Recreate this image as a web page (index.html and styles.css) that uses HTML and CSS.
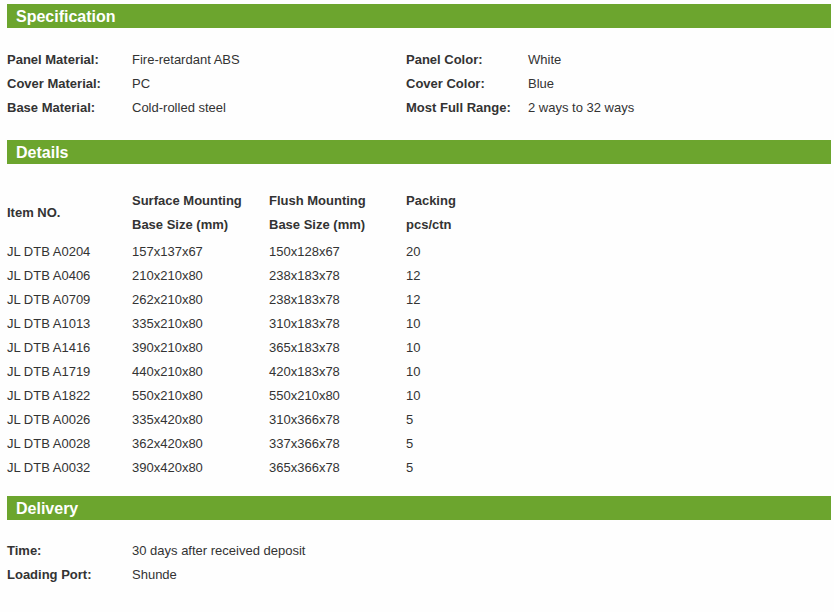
FILE: index.html
```html
<!DOCTYPE html>
<html>
<head>
<meta charset="utf-8">
<link rel="stylesheet" href="styles.css">
</head>
<body>
<div class="page">
  <h2 class="bar">Specification</h2>
  <div class="spec">
    <div class="lbl">Panel Material:</div><div class="val">Fire-retardant ABS</div>
    <div class="lbl">Panel Color:</div><div class="val">White</div>
    <div class="lbl">Cover Material:</div><div class="val">PC</div>
    <div class="lbl">Cover Color:</div><div class="val">Blue</div>
    <div class="lbl">Base Material:</div><div class="val">Cold-rolled steel</div>
    <div class="lbl">Most Full Range:</div><div class="val">2 ways to 32 ways</div>
  </div>

  <h2 class="bar bar-details">Details</h2>
  <div class="details">
    <div class="head">
      <div class="th item">Item NO.</div>
      <div class="th">Surface Mounting<br>Base Size (mm)</div>
      <div class="th">Flush Mounting<br>Base Size (mm)</div>
      <div class="th">Packing<br>pcs/ctn</div>
    </div>
    <div class="rows">
      <div>JL DTB A0204</div><div>157x137x67</div><div>150x128x67</div><div>20</div>
      <div>JL DTB A0406</div><div>210x210x80</div><div>238x183x78</div><div>12</div>
      <div>JL DTB A0709</div><div>262x210x80</div><div>238x183x78</div><div>12</div>
      <div>JL DTB A1013</div><div>335x210x80</div><div>310x183x78</div><div>10</div>
      <div>JL DTB A1416</div><div>390x210x80</div><div>365x183x78</div><div>10</div>
      <div>JL DTB A1719</div><div>440x210x80</div><div>420x183x78</div><div>10</div>
      <div>JL DTB A1822</div><div>550x210x80</div><div>550x210x80</div><div>10</div>
      <div>JL DTB A0026</div><div>335x420x80</div><div>310x366x78</div><div>5</div>
      <div>JL DTB A0028</div><div>362x420x80</div><div>337x366x78</div><div>5</div>
      <div>JL DTB A0032</div><div>390x420x80</div><div>365x366x78</div><div>5</div>
    </div>
  </div>

  <h2 class="bar bar-delivery">Delivery</h2>
  <div class="delivery">
    <div class="lbl">Time:</div><div class="val">30 days after received deposit</div>
    <div class="lbl">Loading Port:</div><div class="val">Shunde</div>
  </div>
</div>
</body>
</html>
```

FILE: styles.css
```css
html, body {
  margin: 0;
  padding: 0;
  background: #fefefe;
}
body {
  font-family: "Liberation Sans", Arial, sans-serif;
  font-size: 13px;
  color: #333;
}
.page {
  padding: 4px 3px 0 7px;
}
.bar {
  margin: 0;
  box-sizing: border-box;
  height: 24px;
  line-height: 23px;
  padding-top: 1px;
  background: #6ca52e;
  color: #fff;
  font-size: 16px;
  font-weight: bold;
  padding-left: 9px;
}
.spec {
  margin-top: 19px;
  display: grid;
  grid-template-columns: 125px 274px 122px 1fr;
  grid-auto-rows: 24px;
  line-height: 24px;
  padding-top: 1px;
}
.lbl {
  font-weight: bold;
}
.bar-details {
  margin-top: 20px;
}
.details {
  margin-top: 24px;
  padding-top: 1px;
}
.head {
  display: grid;
  grid-template-columns: 125px 137px 137px 1fr;
  line-height: 24px;
  font-weight: bold;
}
.th.item {
  align-self: center;
}
.rows {
  margin-top: 3px;
  display: grid;
  grid-template-columns: 125px 137px 137px 1fr;
  grid-auto-rows: 24px;
  line-height: 24px;
}
.bar-delivery {
  margin-top: 16px;
}
.delivery {
  margin-top: 18px;
  padding-top: 1px;
  display: grid;
  grid-template-columns: 125px 1fr;
  grid-auto-rows: 24px;
  line-height: 24px;
}
```
